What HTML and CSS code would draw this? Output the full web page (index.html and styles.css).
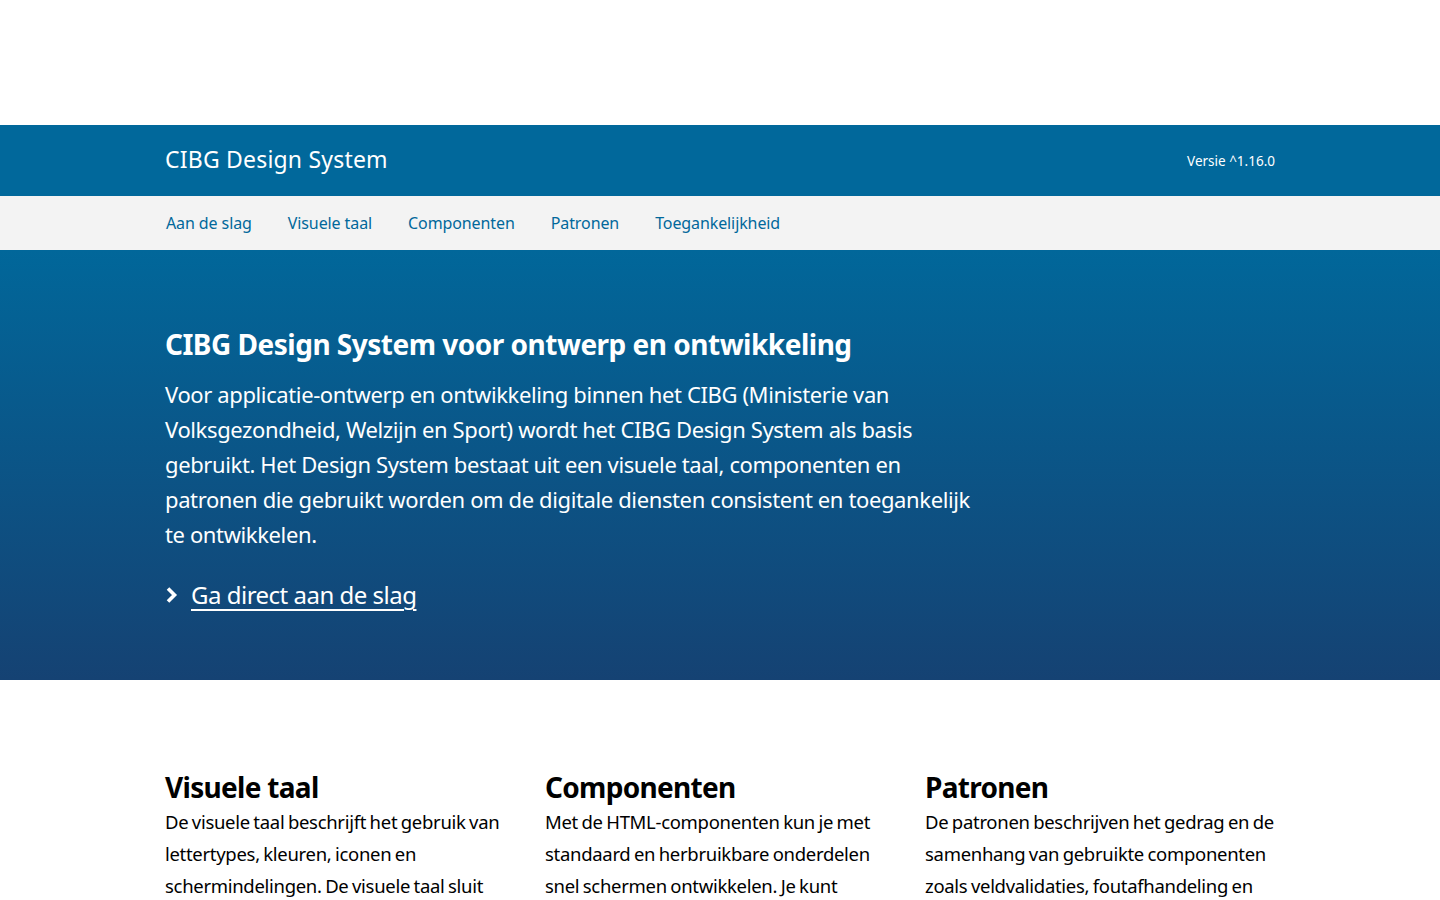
FILE: index.html
```html
<!DOCTYPE html>
<html lang="nl">
<head>
<meta charset="utf-8">
<title>CIBG Design System</title>
<link rel="stylesheet" href="styles.css">
</head>
<body>
<div class="topspace"></div>
<header class="brandbar">
  <div class="container brandbar-inner">
    <span class="brand">CIBG Design System</span>
    <span class="version">Versie ^1.16.0</span>
  </div>
</header>
<nav class="mainnav">
  <ul class="container navlist">
    <li><a href="#">Aan de slag</a></li>
    <li><a href="#">Visuele taal</a></li>
    <li><a href="#">Componenten</a></li>
    <li><a href="#">Patronen</a></li>
    <li><a href="#">Toegankelijkheid</a></li>
  </ul>
</nav>
<section class="hero">
  <div class="container">
    <h1 class="hero-title">CIBG Design System voor ontwerp en ontwikkeling</h1>
    <p class="hero-text">Voor applicatie-ontwerp en ontwikkeling binnen het CIBG (Ministerie van Volksgezondheid, Welzijn en Sport) wordt het CIBG Design System als basis gebruikt. Het Design System bestaat uit een visuele taal, componenten en patronen die gebruikt worden om de digitale diensten consistent en toegankelijk te ontwikkelen.</p>
    <a class="hero-link" href="#"><svg class="chev" width="14" height="18" viewBox="0 0 14 18"><path d="M3 2.5 L9.5 9 L3 15.5" fill="none" stroke="#fff" stroke-width="3.6" stroke-linejoin="miter"/></svg><span>Ga direct aan de slag</span></a>
  </div>
</section>
<main class="container cards">
  <div class="card">
    <h2>Visuele taal</h2>
    <p>De visuele taal beschrijft het gebruik van lettertypes, kleuren, iconen en schermindelingen. De visuele taal sluit aan bij de huisstijl van de Rijksoverheid.</p>
  </div>
  <div class="card">
    <h2>Componenten</h2>
    <p>Met de HTML-componenten kun je met standaard en herbruikbare onderdelen snel schermen ontwikkelen. Je kunt componenten combineren tot patronen.</p>
  </div>
  <div class="card">
    <h2>Patronen</h2>
    <p>De patronen beschrijven het gedrag en de samenhang van gebruikte componenten zoals veldvalidaties, foutafhandeling en navigatie.</p>
  </div>
</main>
</body>
</html>
```
FILE: styles.css
```css
* { box-sizing: border-box; }
html, body { margin: 0; padding: 0; }
body {
  font-family: "Noto Sans", "Open Sans", sans-serif;
  color: #000;
  background: #fff;
}
.container {
  width: 1110px;
  margin: 0 auto;
}
.topspace { height: 125px; }
.brandbar {
  background: #01689b;
  color: #fff;
  height: 71px;
}
.brandbar-inner {
  height: 100%;
  display: flex;
  align-items: center;
  justify-content: space-between;
}
.brand {
  font-size: 23px;
  letter-spacing: 0.2px;
  padding-bottom: 3px;
}
.version {
  font-size: 13.5px;
}
.mainnav {
  background: #f3f3f3;
  height: 54px;
}
.navlist {
  list-style: none;
  padding: 0;
  display: flex;
  gap: 35px;
  height: 100%;
  align-items: center;
}
.navlist li { margin: 0; padding-left: 1px; }
.navlist a {
  color: #01689b;
  text-decoration: none;
  font-size: 16px;
  letter-spacing: -0.1px;
  display: block;
  padding-bottom: 1px;
}
.hero {
  background: linear-gradient(180deg, #01679a 0%, #154273 100%);
  color: #fff;
  height: 430px;
  padding-top: 74px;
}
.hero-title {
  margin: 0;
  font-size: 28px;
  font-weight: 700;
  line-height: 40px;
  letter-spacing: -0.5px;
}
.hero-text {
  margin: 13px 0 0;
  font-size: 22px;
  line-height: 35px;
  letter-spacing: -0.38px;
  max-width: 815px;
}
.hero-link {
  display: inline-flex;
  align-items: center;
  gap: 12px;
  margin-top: 26px;
  color: #fff;
  font-size: 24px;
  letter-spacing: -0.5px;
  text-decoration: underline;
  text-decoration-thickness: 2px;
  text-underline-offset: 5px;
}
.chev { display: block; }
.cards {
  display: grid;
  grid-template-columns: repeat(3, 1fr);
  gap: 30px;
  padding-top: 88px;
}
.card h2 {
  margin: 0;
  font-size: 28px;
  line-height: 38px;
  font-weight: 700;
  letter-spacing: -0.7px;
}
.card p {
  margin: 0;
  font-size: 18.5px;
  line-height: 32px;
  letter-spacing: -0.3px;
  word-spacing: -1px;
}
```
